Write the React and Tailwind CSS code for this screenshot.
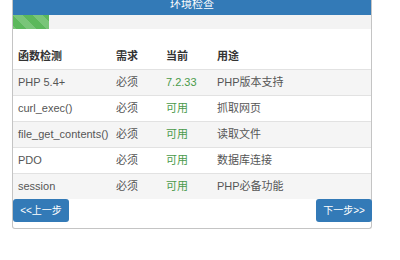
const rows = [
    { name: 'PHP 5.4+', need: '必须', cur: '7.2.33', use: 'PHP版本支持' },
    { name: 'curl_exec()', need: '必须', cur: '可用', use: '抓取网页' },
    { name: 'file_get_contents()', need: '必须', cur: '可用', use: '读取文件' },
    { name: 'PDO', need: '必须', cur: '可用', use: '数据库连接' },
    { name: 'session', need: '必须', cur: '可用', use: 'PHP必备功能' },
];

export default function App() {
    return (
        <div className="w-[400px] h-[260px] bg-white overflow-hidden font-['Liberation_Sans','Noto_Sans_CJK_SC',sans-serif]">
            <div className="ml-[12px] w-[360px] -mt-[7px] border border-[#c4c4c4] border-t-0 rounded-b-[3px] pb-[6px]">
                <div className="h-[22px] bg-[#337ab7] flex items-center justify-center text-white text-[11px]">
                    环境检查
                </div>
                <div className="h-[14px] bg-[#f3f3f3]">
                    <div className="h-full w-[36px] bg-[#5cb85c] bg-[linear-gradient(45deg,rgba(255,255,255,.18)_25%,transparent_25%,transparent_50%,rgba(255,255,255,.18)_50%,rgba(255,255,255,.18)_75%,transparent_75%,transparent)] bg-[length:20px_20px]"></div>
                </div>
                <table className="mt-[15px] w-full text-[11px] text-[#555] border-collapse">
                    <thead>
                        <tr className="h-[25px] text-[#333] font-bold text-left">
                            <th className="w-[103px] pl-[5px] align-middle">函数检测</th>
                            <th className="w-[50px]">需求</th>
                            <th className="w-[51px]">当前</th>
                            <th>用途</th>
                        </tr>
                    </thead>
                    <tbody>
                        {rows.map((r, i) => (
                            <tr key={r.name} className={`h-[26px] border-t border-[#e2e2e2] ${i % 2 === 0 ? 'bg-[#f5f5f5]' : 'bg-white'}`}>
                                <td className="pl-[5px]">{r.name}</td>
                                <td>{r.need}</td>
                                <td className="text-[#4a9a4a]">{r.cur}</td>
                                <td>{r.use}</td>
                            </tr>
                        ))}
                    </tbody>
                </table>
                <div className="flex justify-between">
                    <button className="h-[23px] w-[56px] bg-[#337ab7] text-white text-[10px] rounded-[3px]">&lt;&lt;上一步</button>
                    <button className="h-[23px] w-[56px] -mr-px bg-[#337ab7] text-white text-[10px] rounded-[3px]">下一步&gt;&gt;</button>
                </div>
            </div>
        </div>
    );
}
